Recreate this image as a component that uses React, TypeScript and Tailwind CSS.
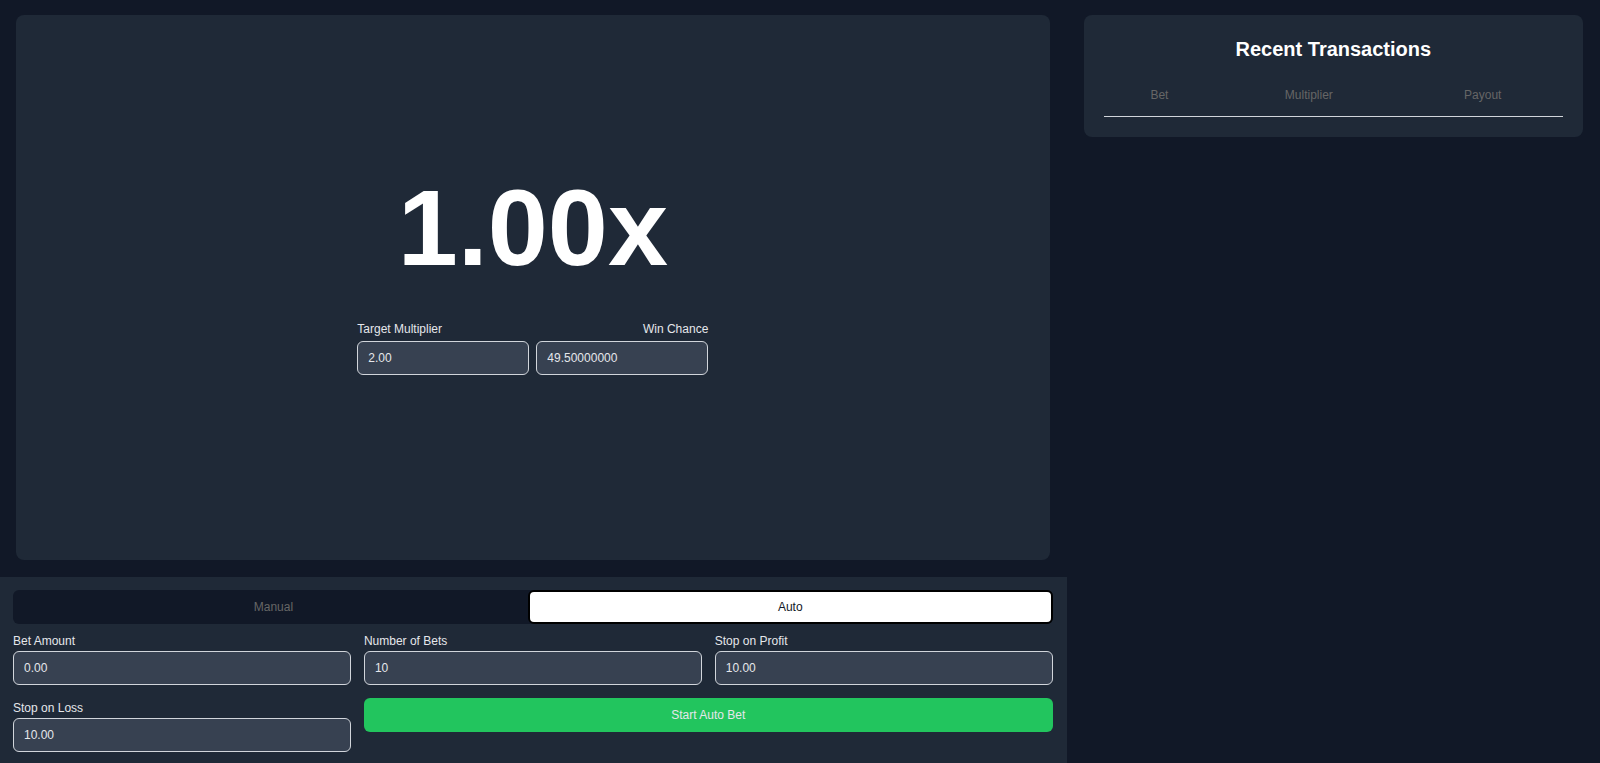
import { useState } from "react";

type FieldProps = {
  id: string;
  label: string;
  initial: string;
  labelClass?: string;
};

function Field({ id, label, initial, labelClass = "h-5" }: FieldProps) {
  const [value, setValue] = useState(initial);
  return (
    <div className="flex min-w-0 flex-1 flex-col">
      <label htmlFor={id} className={`leading-5 ${labelClass}`}>
        {label}
      </label>
      <input
        id={id}
        type="text"
        value={value}
        onChange={(event) => setValue(event.target.value)}
        className="h-[34px] w-full rounded-md border border-[#d1d5db] bg-[#374151] px-2.5 text-xs text-[#e5e7eb] outline-none"
      />
    </div>
  );
}

function GameDisplay() {
  return (
    <section className="flex flex-1 flex-col pt-[15px] pr-[17px] pb-[17px] pl-4">
      <div className="flex flex-1 flex-col items-center justify-center gap-[37px] rounded-lg bg-[#1f2937] pb-[27px]">
        <p className="text-[108px] leading-none font-bold text-white">1.00x</p>
        <div className="flex w-[351px] max-w-full gap-[7px]">
          <Field
            id="target-multiplier"
            label="Target Multiplier"
            initial="2.00"
            labelClass="h-[22px]"
          />
          <Field
            id="win-chance"
            label="Win Chance"
            initial="49.50000000"
            labelClass="h-[22px] text-right"
          />
        </div>
      </div>
    </section>
  );
}

function BetControls() {
  const [mode, setMode] = useState<"manual" | "auto">("auto");
  const active = "rounded-md border-2 border-black bg-white text-[#111827]";
  const idle = "rounded-md text-[#666666]";
  return (
    <section className="bg-[#1f2937] pt-[13px] pr-3.5 pb-[11px] pl-[13px]">
      <div className="flex h-[34px] rounded-md bg-[#111827]">
        <button
          type="button"
          onClick={() => setMode("manual")}
          className={`flex-1 ${mode === "manual" ? active : idle}`}
        >
          Manual
        </button>
        <button
          type="button"
          onClick={() => setMode("auto")}
          className={`-ml-1.5 flex-1 ${mode === "auto" ? active : idle}`}
        >
          Auto
        </button>
      </div>
      <div className="mt-[7px] grid grid-cols-3 gap-[13px]">
        <Field id="bet-amount" label="Bet Amount" initial="0.00" />
        <Field id="number-of-bets" label="Number of Bets" initial="10" />
        <Field id="stop-on-profit" label="Stop on Profit" initial="10.00" />
        <Field id="stop-on-loss" label="Stop on Loss" initial="10.00" />
        <button
          type="button"
          className="col-span-2 h-[34px] rounded-md bg-[#22c55e] text-[#e5e7eb]"
        >
          Start Auto Bet
        </button>
      </div>
    </section>
  );
}

function RecentTransactions() {
  return (
    <aside className="flex-1 px-[17px] pt-[15px]">
      <div className="rounded-lg bg-[#1f2937] p-5">
        <h2 className="text-center text-xl leading-7 font-bold text-white">
          Recent Transactions
        </h2>
        <table className="mt-3 w-full border-collapse">
          <thead>
            <tr className="h-[41px] border-b border-[#d1d5db] text-[#666666]">
              <th className="px-[13px] font-normal">Bet</th>
              <th className="px-[13px] font-normal">Multiplier</th>
              <th className="px-[13px] font-normal">Payout</th>
            </tr>
          </thead>
        </table>
      </div>
    </aside>
  );
}

export default function App() {
  return (
    <div className="flex min-h-screen bg-[#111827] font-['Liberation_Sans',Arial,sans-serif] text-xs text-[#e5e7eb]">
      <main className="flex w-2/3 flex-col">
        <GameDisplay />
        <BetControls />
      </main>
      <RecentTransactions />
    </div>
  );
}
